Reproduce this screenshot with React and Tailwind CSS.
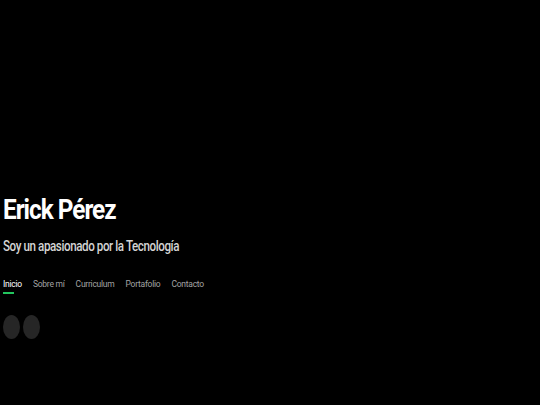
import React from 'react';

const links = ['Inicio', 'Sobre mí', 'Curriculum', 'Portafolio', 'Contacto'];

export default function App() {
  return (
    <div className="w-[540px] h-[405px] bg-black overflow-hidden">
      <div className="flex flex-col pl-[3px] pt-[194px]">
        <h1 className="origin-left scale-x-[0.9] text-[27px] leading-[32px] font-bold text-white tracking-[-1.1px] [font-family:'Roboto',sans-serif]">
          Erick Pérez
        </h1>
        <p className="origin-left scale-x-[0.83] mt-[11px] text-[14px] leading-[18px] font-medium text-[#d4d4d4] tracking-[-0.5px] [font-family:'Roboto',sans-serif]">
          Soy un apasionado por la Tecnología
        </p>
        <nav className="mt-[24px] flex gap-[11px] text-[8.5px] leading-[11px] tracking-[-0.25px] [font-family:'Roboto',sans-serif]">
          {links.map((l, i) => (
            <div key={l} className="flex flex-col">
              <span className={i === 0 ? 'text-white' : 'text-[#a3a3a3]'}>{l}</span>
              {i === 0 && <span className="mt-[2px] h-[2px] w-[11px] bg-[#22c55e]" />}
            </div>
          ))}
        </nav>
        <div className="mt-[21px] flex gap-[3px]">
          <div className="w-[17px] h-[24px] rounded-[50%] bg-[#262626]" />
          <div className="w-[17px] h-[24px] rounded-[50%] bg-[#262626]" />
        </div>
      </div>
    </div>
  );
}
